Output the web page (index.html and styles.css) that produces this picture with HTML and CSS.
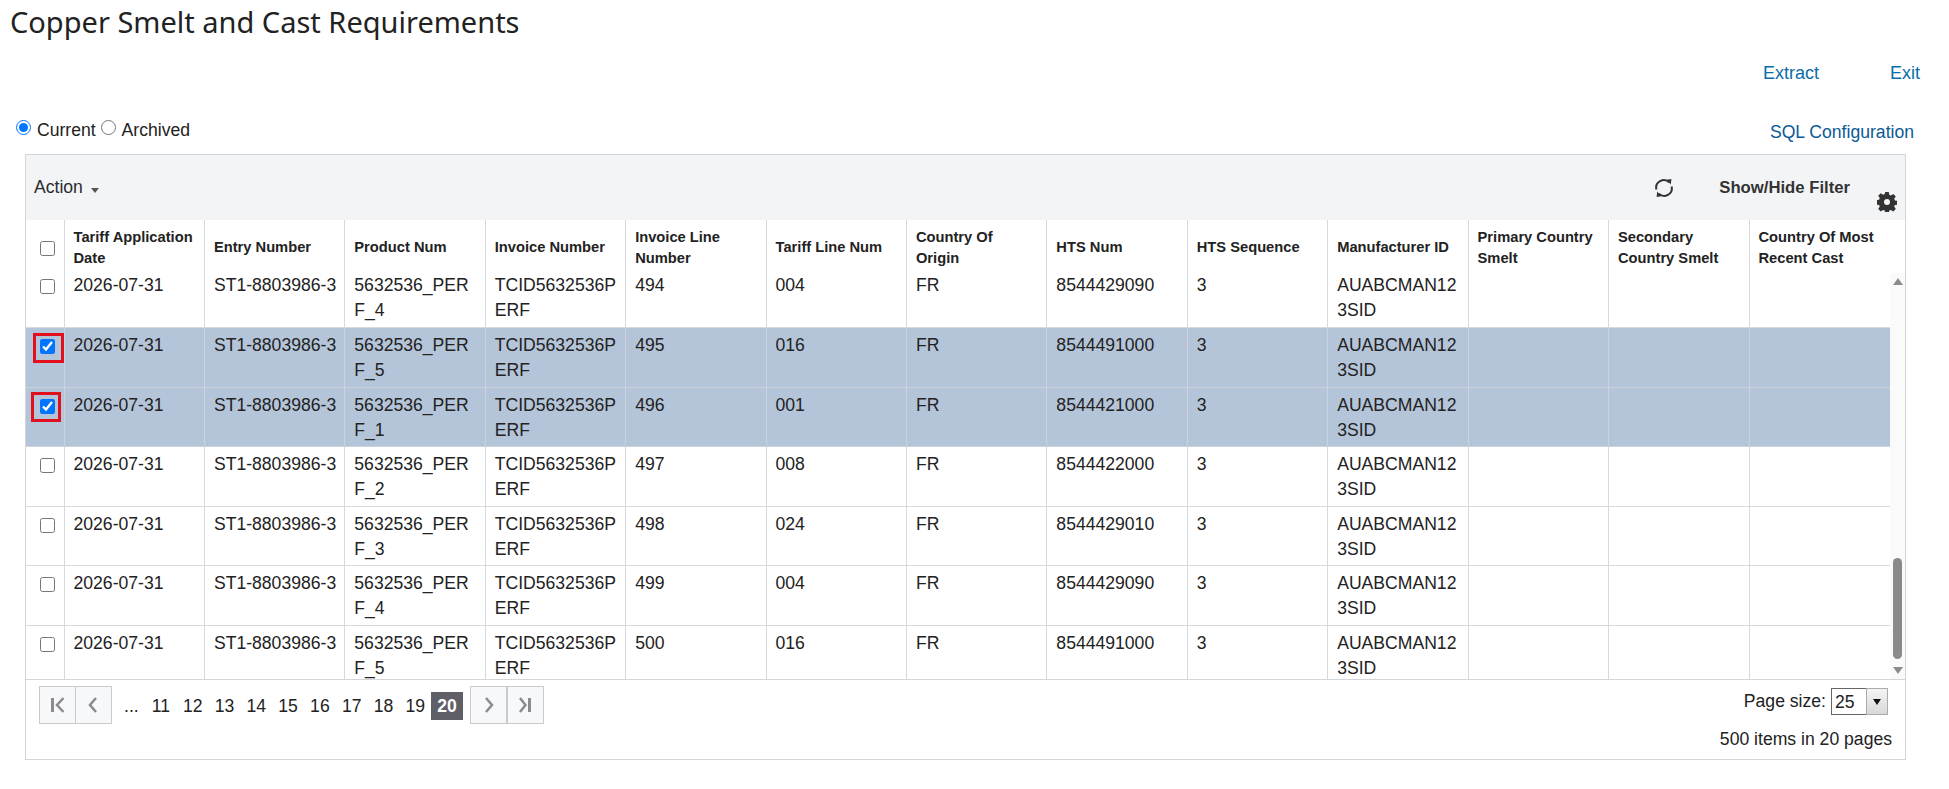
FILE: index.html
```html
<!DOCTYPE html>
<html lang="en">

<head>
    <meta charset="UTF-8">
    <title>Copper Smelt and Cast Requirements</title>
<link rel="stylesheet" href="styles.css">
</head>
<body>
<h1 class="title">Copper Smelt and Cast Requirements</h1>
<div class="actions">
    <a href="#">Extract</a>
    <a href="#">Exit</a>
</div>
<div class="mode">
    <div class="radios">
        <input type="radio" name="mode" id="current" checked><label for="current">Current</label>
        <input type="radio" name="mode" id="archived"><label for="archived">Archived</label>
    </div>
    <a class="sql" href="#">SQL Configuration</a>
</div>

<div class="grid">
    <div class="toolbar">
        <span class="action">Action<span class="caret"></span></span>
        <svg class="refresh" viewBox="0 0 20 20" width="20" height="20">
            <path d="M2.4 11.5A7.6 7.6 0 0 1 15.2 4.4" fill="none" stroke="#333" stroke-width="2"/>
            <path d="M17.6 8.5A7.6 7.6 0 0 1 4.8 15.6" fill="none" stroke="#333" stroke-width="2"/>
            <path d="M12.6 1.8 17.4 1 16.8 6.6z" fill="#333"/>
            <path d="M7.4 18.2 2.6 19 3.2 13.4z" fill="#333"/>
        </svg>
        <span class="filter">Show/Hide Filter</span>
        <svg class="gear" viewBox="0 0 20 20" width="20" height="20">
            <path fill-rule="evenodd" fill="#333" d="M8.2 0h3.6l.5 2.8 1.6.7 2.4-1.6 2.5 2.5-1.6 2.4.7 1.6 2.8.5v3.6l-2.8.5-.7 1.6 1.6 2.4-2.5 2.5-2.4-1.6-1.6.7-.5 2.8H8.2l-.5-2.8-1.6-.7-2.4 1.6-2.5-2.5 1.6-2.4-.7-1.6-2.8-.5V8.2l2.8-.5.7-1.6-1.6-2.4 2.5-2.5 2.4 1.6 1.6-.7zM10 7a3 3 0 1 0 0 6 3 3 0 0 0 0-6z"/>
        </svg>
    </div>

    <table class="head">
        <colgroup>
            <col class="c-check"><col><col><col><col><col><col><col><col><col><col><col><col><col class="c-last">
        </colgroup>
        <tr>
            <th class="check"><input type="checkbox"></th>
            <th>Tariff Application Date</th>
            <th>Entry Number</th>
            <th>Product Num</th>
            <th>Invoice Number</th>
            <th>Invoice Line Number</th>
            <th>Tariff Line Num</th>
            <th>Country Of Origin</th>
            <th>HTS Num</th>
            <th>HTS Sequence</th>
            <th>Manufacturer ID</th>
            <th>Primary Country Smelt</th>
            <th>Secondary Country Smelt</th>
            <th>Country Of Most Recent Cast</th>
        </tr>
    </table>

    <div class="content">
        <div class="rows">
            <table class="body">
                <colgroup>
                    <col class="c-box"><col><col><col><col><col><col><col><col><col><col><col><col><col class="c-rest">
                </colgroup>
                <tbody>
                    <tr>
                        <td class="check"><input type="checkbox"></td>
                        <td>2026-07-31</td><td>ST1-8803986-3</td><td>5632536_PERF_4</td><td>TCID5632536PERF</td>
                        <td>494</td><td>004</td><td>FR</td><td>8544429090</td><td>3</td><td>AUABCMAN123SID</td>
                        <td></td><td></td><td></td>
                    </tr>
                    <tr class="selected">
                        <td class="check"><input type="checkbox" checked><span class="mark mark-a"></span></td>
                        <td>2026-07-31</td><td>ST1-8803986-3</td><td>5632536_PERF_5</td><td>TCID5632536PERF</td>
                        <td>495</td><td>016</td><td>FR</td><td>8544491000</td><td>3</td><td>AUABCMAN123SID</td>
                        <td></td><td></td><td></td>
                    </tr>
                    <tr class="selected">
                        <td class="check"><input type="checkbox" checked><span class="mark mark-b"></span></td>
                        <td>2026-07-31</td><td>ST1-8803986-3</td><td>5632536_PERF_1</td><td>TCID5632536PERF</td>
                        <td>496</td><td>001</td><td>FR</td><td>8544421000</td><td>3</td><td>AUABCMAN123SID</td>
                        <td></td><td></td><td></td>
                    </tr>
                    <tr>
                        <td class="check"><input type="checkbox"></td>
                        <td>2026-07-31</td><td>ST1-8803986-3</td><td>5632536_PERF_2</td><td>TCID5632536PERF</td>
                        <td>497</td><td>008</td><td>FR</td><td>8544422000</td><td>3</td><td>AUABCMAN123SID</td>
                        <td></td><td></td><td></td>
                    </tr>
                    <tr>
                        <td class="check"><input type="checkbox"></td>
                        <td>2026-07-31</td><td>ST1-8803986-3</td><td>5632536_PERF_3</td><td>TCID5632536PERF</td>
                        <td>498</td><td>024</td><td>FR</td><td>8544429010</td><td>3</td><td>AUABCMAN123SID</td>
                        <td></td><td></td><td></td>
                    </tr>
                    <tr>
                        <td class="check"><input type="checkbox"></td>
                        <td>2026-07-31</td><td>ST1-8803986-3</td><td>5632536_PERF_4</td><td>TCID5632536PERF</td>
                        <td>499</td><td>004</td><td>FR</td><td>8544429090</td><td>3</td><td>AUABCMAN123SID</td>
                        <td></td><td></td><td></td>
                    </tr>
                    <tr>
                        <td class="check"><input type="checkbox"></td>
                        <td>2026-07-31</td><td>ST1-8803986-3</td><td>5632536_PERF_5</td><td>TCID5632536PERF</td>
                        <td>500</td><td>016</td><td>FR</td><td>8544491000</td><td>3</td><td>AUABCMAN123SID</td>
                        <td></td><td></td><td></td>
                    </tr>
                </tbody>
            </table>
        </div>
        <div class="scrollbar">
            <span class="arrow up"></span>
            <span class="thumb"></span>
            <span class="arrow down"></span>
        </div>
    </div>

    <div class="pager">
        <div class="pages">
            <span class="btns">
                <button class="btn"><svg viewBox="0 0 16 16" width="16" height="16"><path d="M2.5 1v14" stroke="#8a8a90" stroke-width="3" fill="none"/><path d="M13.5 1 7 8l6.5 7" stroke="#8a8a90" stroke-width="2.5" fill="none"/></svg></button><button class="btn"><svg viewBox="0 0 16 16" width="16" height="16"><path d="M10 1 4 8l6 7" stroke="#8a8a90" stroke-width="2.5" fill="none"/></svg></button>
            </span>
            <span class="nums">
                <a>...</a><a>11</a><a>12</a><a>13</a><a>14</a><a>15</a><a>16</a><a>17</a><a>18</a><a>19</a><a class="on">20</a>
            </span>
            <span class="btns">
                <button class="btn btn-wide"><svg viewBox="0 0 16 16" width="16" height="16"><path d="M6 1l6 7-6 7" stroke="#8a8a90" stroke-width="2.5" fill="none"/></svg></button><button class="btn"><svg viewBox="0 0 16 16" width="16" height="16"><path d="M3 1l5.5 7L3 15" stroke="#8a8a90" stroke-width="2.5" fill="none"/><path d="M12.5 1v14" stroke="#8a8a90" stroke-width="3" fill="none"/></svg></button>
            </span>
        </div>
        <div class="info">
            <div class="size">Page size:
                <span class="select"><span class="val">25</span><span class="pick"></span></span>
            </div>
            <div class="total">500 items in 20 pages</div>
        </div>
    </div>
</div>
</body>

</html>
```
FILE: styles.css
```css
body{
    margin: 0;
    font-family: "Liberation Sans", Arial, sans-serif;
    font-size: 17.6px;
    color: #222;
    background: #fff;
}
a{
    text-decoration: none;
}
.title{
    margin: 0;
    padding: 3px 0 0 10px;
    height: 47px;
    box-sizing: border-box;
    font-family: "Noto Sans", sans-serif;
    font-size: 29px;
    line-height: 38px;
    font-weight: 400;
    color: #222;
}
.actions{
    display: flex;
    justify-content: flex-end;
    gap: 71px;
    padding: 14px 29px 0 0;
    height: 48px;
    box-sizing: border-box;
    font-size: 18px;
    line-height: 24px;
}
.actions a{
    color: #0a6ea8;
}
.mode{
    display: flex;
    justify-content: space-between;
    height: 59px;
    padding: 23px 11px 0 16px;
    box-sizing: border-box;
    line-height: 24px;
}
.radios input{
    margin: 0 6px 0 0;
    width: 15px;
    height: 15px;
    vertical-align: 1px;
}
.sql{
    margin-right: 24px;
    color: #0a5a96;
    padding-top: 2px;
}
.grid{
    margin-left: 25px;
    width: 1881px;
    height: 606px;
    box-sizing: border-box;
    border: 1px solid #d4d5d8;
}
.toolbar{
    display: flex;
    align-items: center;
    height: 65px;
    background: #f3f4f6;
    padding: 0 8px 0 8px;
}
.action{
    color: #2b2b2f;
}
.caret{
    display: inline-block;
    margin-left: 8px;
    vertical-align: 0;
    border-top: 5px solid #555;
    border-left: 4.5px solid transparent;
    border-right: 4.5px solid transparent;
}
.refresh{
    margin-left: auto;
}
.filter{
    margin-left: 45px;
    font-size: 16.7px;
    font-weight: 700;
    color: #333;
}
.gear{
    margin: 28px 0 0 27px;
}
table{
    width: 100%;
    table-layout: fixed;
    border-collapse: collapse;
}
.c-check{
    width: 38px;
}
.c-box{
    width: 38px;
}
.c-last{
    width: 156px;
}
.c-rest{
    width: 141px;
}
.head{
    height: 53px;
}
.head th{
    padding: 2px 10px 0 9px;
    text-align: left;
    font-size: 14.7px;
    line-height: 21px;
    font-weight: 700;
    color: #222;
    border-left: 1px solid #d8d9dc;
}
.head th:first-child{
    border-left: 0;
}
.check input{
    width: 15px;
    height: 15px;
    margin: 0;
    vertical-align: top;
}
.head th.check{
    padding: 10px 0 0 14px;
}
.content{
    display: flex;
    height: 406px;
    border-bottom: 1px solid #d4d5d8;
}
.rows{
    flex: 1;
    overflow: hidden;
}
.body{
    margin-top: -5px;
}
.body td{
    height: 59.5px;
    box-sizing: border-box;
    padding: 5px 7px 0 9px;
    vertical-align: top;
    line-height: 25px;
    word-break: break-all;
    border-left: 1px solid #d8d9dc;
    border-bottom: 1px solid #d8d9dc;
}
.body td:first-child{
    border-left: 0;
}
.body td.check{
    position: relative;
    padding: 11px 0 0 14px;
}
/* red annotation boxes drawn over the ticked rows */
.mark{
    position: absolute;
    box-sizing: border-box;
    height: 30px;
    border: 3px solid #e0101e;
}
.mark-a{
    top: 5px;
    left: 7px;
    width: 31px;
}
.mark-b{
    top: 4px;
    left: 5px;
    width: 30px;
}
.selected td{
    background: #b5c5d9;
    border-color: #cdd3dc;
}
.scrollbar{
    display: flex;
    flex-direction: column;
    align-items: center;
    width: 15px;
    background: #fafafa;
}
.arrow{
    height: 0;
    border-left: 5px solid transparent;
    border-right: 5px solid transparent;
}
.up{
    margin-top: 5px;
    border-bottom: 7px solid #8c8c8c;
}
.down{
    margin: 8px 0 5px;
    border-top: 7px solid #8c8c8c;
}
.thumb{
    width: 9px;
    height: 101px;
    margin-top: auto;
    background: #8a8a8a;
    border-radius: 5px;
}
.pager{
    display: flex;
    justify-content: space-between;
    padding: 6px 0 0 13px;
}
.pages{
    display: flex;
    align-items: flex-start;
}
.btns{
    display: flex;
}
.btn{
    display: flex;
    align-items: center;
    justify-content: center;
    width: 37px;
    height: 38px;
    padding: 0;
    background: #f7f8fa;
    border: 1px solid #c9cacd;
}
.btn + .btn{
    margin-left: -1px;
}
.btn-wide{
    width: 38px;
    border-right-width: 2px;
}
.nums{
    display: flex;
    height: 28px;
    margin: 6px 7px 0 12px;
    line-height: 29px;
}
.nums a{
    width: 31.8px;
    text-align: center;
}
.nums a:first-child{
    width: 21px;
    text-align: left;
}
.nums .on{
    background: #5f5f67;
    color: #fff;
    font-weight: 700;
}
.info{
    text-align: right;
}
.size{
    display: flex;
    justify-content: flex-end;
    align-items: center;
    gap: 5px;
    margin-top: 1px;
    padding: 0 17px 0 0;
    height: 28px;
}
.select{
    display: flex;
    width: 57px;
    height: 27px;
    box-sizing: border-box;
    border: 1px solid #666;
}
.val{
    flex: 1;
    text-align: left;
    padding-left: 3px;
    line-height: 27px;
}
.pick{
    position: relative;
    width: 22px;
    margin: -1px -1px -1px 0;
    background: linear-gradient(#f4f4f4, #d8d8d8);
    border: 1px solid #aaa;
    box-sizing: border-box;
}
.pick::after{
    position: absolute;
    top: 10px;
    left: 6px;
    content: "";
    border-top: 6px solid #111;
    border-left: 4px solid transparent;
    border-right: 4px solid transparent;
}
.total{
    padding: 12px 13px 0 0;
    line-height: 24px;
}
```
